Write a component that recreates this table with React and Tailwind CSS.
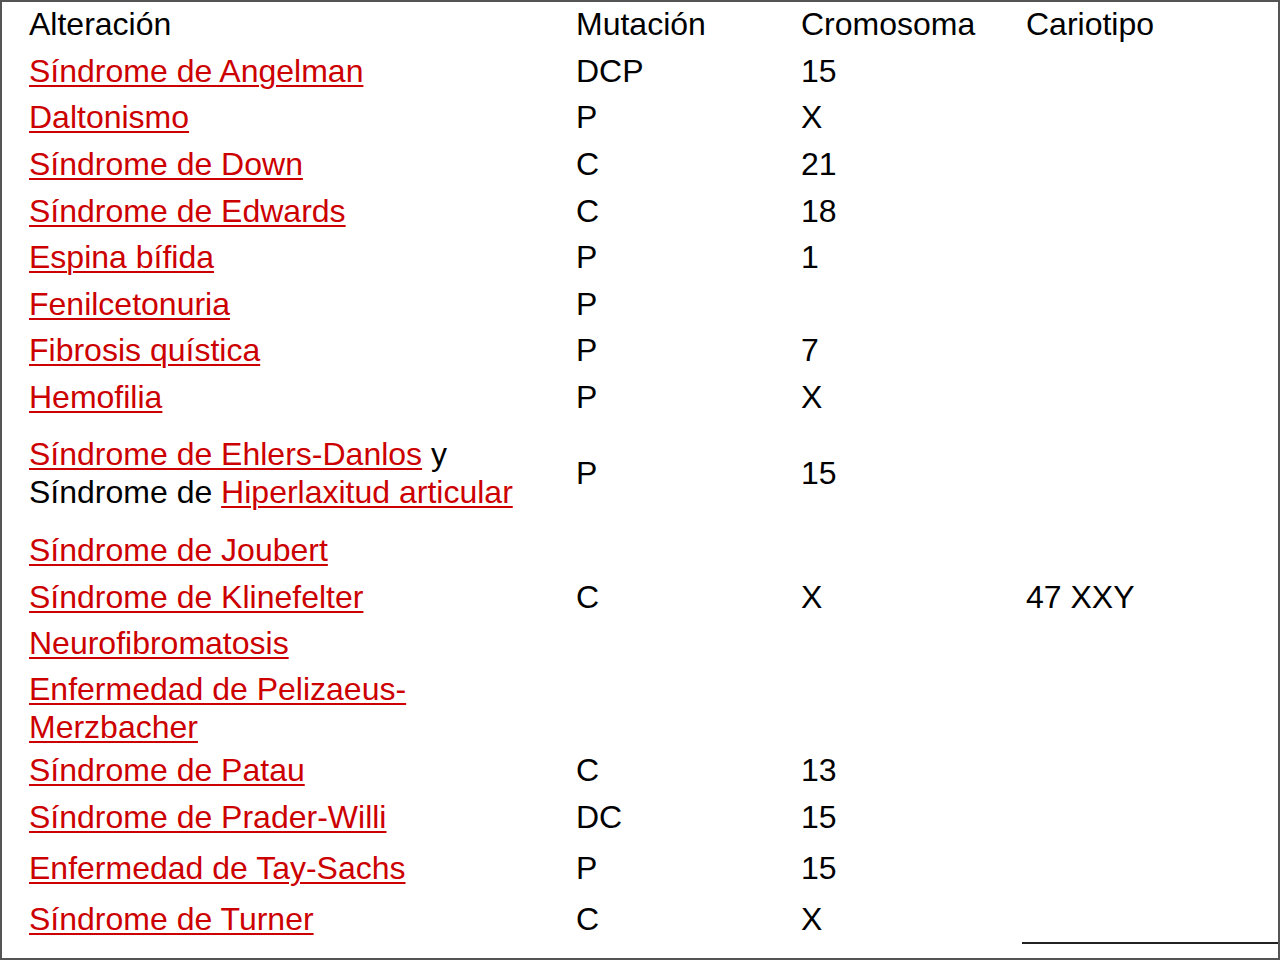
const L = ({ children }) => (
  <span className="text-[#cc0000] underline decoration-2 underline-offset-[3px]">{children}</span>
);

const rows = [
  { h: "h-[47px]", a: "Alteración", m: "Mutación", c: "Cromosoma", k: "Cariotipo", header: true },
  { h: "h-[47px]", a: <L>Síndrome de Angelman</L>, m: "DCP", c: "15" },
  { h: "h-[46px]", a: <L>Daltonismo</L>, m: "P", c: "X" },
  { h: "h-[47px]", a: <L>Síndrome de Down</L>, m: "C", c: "21" },
  { h: "h-[47px]", a: <L>Síndrome de Edwards</L>, m: "C", c: "18" },
  { h: "h-[46px]", a: <L>Espina bífida</L>, m: "P", c: "1" },
  { h: "h-[47px]", a: <L>Fenilcetonuria</L>, m: "P", c: "" },
  { h: "h-[46px]", a: <L>Fibrosis quística</L>, m: "P", c: "7" },
  { h: "h-[47px]", a: <L>Hemofilia</L>, m: "P", c: "X" },
  {
    h: "h-[106px]",
    a: (
      <>
        <L>Síndrome de Ehlers-Danlos</L> y
        <br />
        Síndrome de <L>Hiperlaxitud articular</L>
      </>
    ),
    m: "P",
    c: "15",
  },
  { h: "h-[47px]", a: <L>Síndrome de Joubert</L>, m: "", c: "" },
  { h: "h-[47px]", a: <L>Síndrome de Klinefelter</L>, m: "C", c: "X", k: "47 XXY" },
  { h: "h-[46px]", a: <L>Neurofibromatosis</L>, m: "", c: "" },
  {
    h: "h-[83px]",
    a: (
      <>
        <L>Enfermedad de Pelizaeus-</L>
        <br />
        <L>Merzbacher</L>
      </>
    ),
    m: "",
    c: "",
  },
  { h: "h-[42px]", a: <L>Síndrome de Patau</L>, m: "C", c: "13" },
  { h: "h-[52px]", a: <L>Síndrome de Prader-Willi</L>, m: "DC", c: "15" },
  { h: "h-[50px]", a: <L>Enfermedad de Tay-Sachs</L>, m: "P", c: "15" },
  { h: "h-[52px]", a: <L>Síndrome de Turner</L>, m: "C", c: "X" },
];

export default function App() {
  return (
    <div
      className="w-[1280px] h-[960px] bg-white border-2 border-[#555] overflow-hidden text-black text-[32px] leading-[38px]"
      style={{ fontFamily: '"Liberation Sans", Arial, Helvetica, sans-serif' }}
    >
      <div className="flex flex-col pl-[27px] -mt-[2px]">
        {rows.map((r, i) => (
          <div key={i} className={`flex items-center ${r.h}`}>
            <div className="w-[547px] shrink-0">{r.a}</div>
            <div className="w-[225px] shrink-0">{r.m}</div>
            <div className="w-[225px] shrink-0">{r.c}</div>
            <div className="flex-1">{r.k}</div>
          </div>
        ))}
      </div>
      <div className="flex justify-end mt-[-3px]">
        <div className="w-[256px] h-[2px] bg-[#222]" />
      </div>
    </div>
  );
}
